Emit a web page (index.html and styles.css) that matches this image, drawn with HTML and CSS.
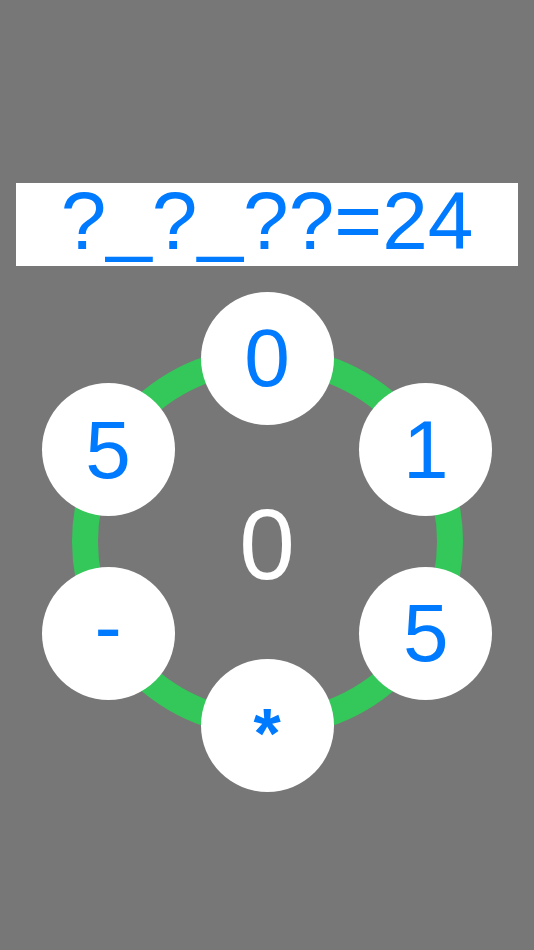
FILE: index.html
```html
<!DOCTYPE html>
<html lang="en">
<head>
    <meta charset="UTF-8">
    <meta name="viewport" content="width=device-width, initial-scale=1.0">
    <title>24</title>
    <link rel="stylesheet" href="styles.css">
</head>
<body>
    <div class="equation">?<span class="blank">_</span>?<span class="blank">_</span>??=24</div>

    <div class="board">
        <div class="ring"></div>
        <div class="total">0</div>

        <div class="node node-top">0</div>
        <div class="node node-upper-right">1</div>
        <div class="node node-lower-right">5</div>
        <div class="node node-bottom"><span class="op-star">*</span></div>
        <div class="node node-lower-left"><span class="op-minus">-</span></div>
        <div class="node node-upper-left">5</div>
    </div>
</body>
</html>
```

FILE: styles.css
```css
html {
    background-color: #777777;
}
body {
    margin: 0;
    padding-top: 183px;
    font-family: 'Liberation Sans', Arial, sans-serif;
    background-color: #777777;
}
.equation {
    margin: 0 16px;
    padding-bottom: 8px;
    background-color: #ffffff;
    color: #007aff;
    font-size: 82px;
    line-height: 75px;
    text-align: center;
}
.blank {
    line-height: 0;
    vertical-align: 3px;
}
.board {
    position: relative;
    width: 500px;
    height: 500px;
    margin: 25.5px auto 0;
    display: flex;
    align-items: center;
    justify-content: center;
}
.ring {
    position: absolute;
    left: 54.5px;
    top: 54.5px;
    width: 391px;
    height: 391px;
    box-sizing: border-box;
    border: 26px solid #34c759;
    border-radius: 50%;
}
.total {
    position: relative;
    padding-top: 5px;
    color: #ffffff;
    font-size: 100px;
}
.node {
    position: absolute;
    width: 133px;
    height: 133px;
    border-radius: 50%;
    background-color: #ffffff;
    color: #007aff;
    font-size: 82px;
    display: flex;
    align-items: center;
    justify-content: center;
}
.node-top {
    left: 183.5px;
    top: 0;
}
.node-bottom {
    left: 183.5px;
    top: 367px;
}
.node-upper-right {
    left: 342.4px;
    top: 91.75px;
}
.node-lower-right {
    left: 342.4px;
    top: 275.25px;
}
.node-upper-left {
    left: 24.6px;
    top: 91.75px;
}
.node-lower-left {
    left: 24.6px;
    top: 275.25px;
}
.op-star {
    padding-top: 18px;
    font-size: 70px;
    font-weight: bold;
}
.op-minus {
    padding-bottom: 12px;
}
```
